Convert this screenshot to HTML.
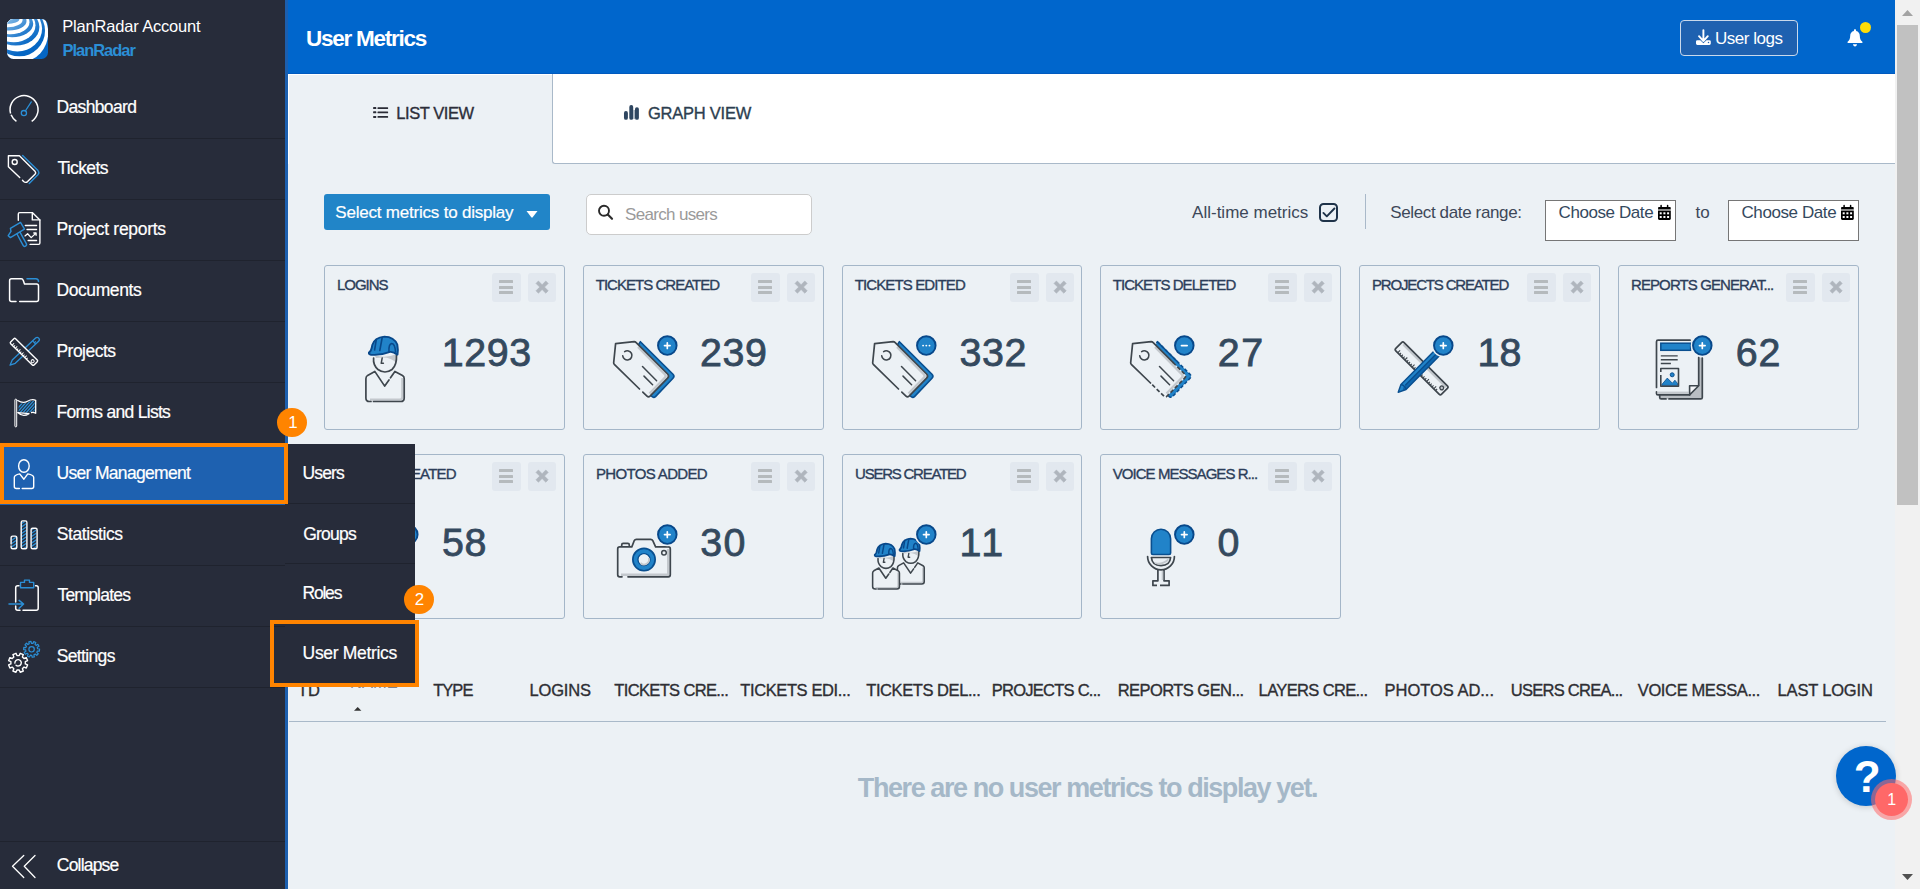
<!DOCTYPE html>
<html lang="en">
<head>
<meta charset="utf-8">
<title>User Metrics</title>
<style>
*{box-sizing:border-box;margin:0;padding:0}
html,body{width:1920px;height:889px;overflow:hidden}
body{position:relative;background:#ecf1f5;font-family:"Liberation Sans",sans-serif;color:#34495e}
.a{position:absolute}
.t{position:absolute;white-space:nowrap;line-height:1}
svg{position:absolute;overflow:visible}
#sidebar{position:absolute;left:0;top:0;width:288px;height:889px;background:#272c3a;border-right:3px solid #1c5fae}
.sep{position:absolute;left:0;width:285px;height:1px;background:#1f232e}
#header{position:absolute;left:288px;top:0;width:1607px;height:74px;background:#0066cc;border-bottom:1px solid #005abf}
#sb{position:absolute;left:1895px;top:0;width:25px;height:889px;background:#f1f1f1}
#sb .thumb{position:absolute;left:2px;top:25px;width:21px;height:480px;background:#c1c1c1}
#tabwhite{position:absolute;left:552px;top:74px;width:1343px;height:90px;background:#fff;border-left:1px solid #a9b9c9;border-bottom:1px solid #a9b9c9;border-bottom-left-radius:3px}
.card{position:absolute;height:165px;border:1px solid #a4b6c8;border-radius:3px}
.cb{position:absolute;width:28.4px;height:28.6px;background:#e2e8ef;border-radius:3px}
.cb i{position:absolute;left:6.9px;width:14.4px;height:2.9px;background:#b5babd;border-radius:.5px}

#sub{position:absolute;left:285px;top:444px;width:130px;height:240px;background:#272c3a}
.ob{position:absolute;border:4px solid #ff8400}
.badge{position:absolute;width:30px;height:29.6px;border-radius:50%;background:#ff8400}
</style>
</head>
<body>
<div id="header"></div>
<div class="t" style="left:306.06px;top:26px;font-size:22.5px;line-height:25px;color:#fff;font-weight:bold;letter-spacing:-1.257px;">User Metrics</div>
<div class="a" style="left:1680px;top:20px;width:118px;height:36px;background:#1e61b0;border:1px solid #c9d9ec;border-radius:4px"></div>
<div class="t" style="left:1714.94px;top:29px;font-size:17px;line-height:19px;color:#fff;letter-spacing:-0.474px;">User logs</div>
<svg style="left:1695px;top:29px" width="17" height="17" viewBox="0 0 17 17"><path d="M8.400 1.100V12.100M4 7.200L8.400 12.100 12.800 7.200" stroke="#fff" stroke-width="1.900" fill="none" stroke-linecap="round" stroke-linejoin="round"/><path d="M2.400 11.200H5.300L8.400 14.200 11.500 11.200H14.400Q15.800 11.200 15.800 12.600V14.600Q15.800 16 14.400 16H2.400Q1 16 1 14.600V12.600Q1 11.200 2.400 11.200Z" fill="#fff"/><circle cx="13.500" cy="13.500" r="0.750" fill="#1e61b0"/></svg>
<svg style="left:1847px;top:29px" width="16" height="18" viewBox="0 0 16 18"><path d="M8 0.3c.7 0 1.1.5 1.1 1.1v.5c2.300.5 3.700 2.300 3.700 4.800 0 3.200 1 4.800 2.600 6.100v1.200H.6v-1.200c1.600-1.300 2.600-2.900 2.600-6.100 0-2.500 1.400-4.300 3.700-4.800v-.5C6.900.8 7.300.3 8 .3z" fill="#fff"/><path d="M6 15.200h4c0 1.200-.9 2.200-2 2.200s-2-1-2-2.200z" fill="#fff"/></svg>
<div class="a" style="left:1860px;top:21.7px;width:11.2px;height:11.2px;border-radius:50%;background:#ffdd08"></div>
<div id="tabwhite"></div>
<div class="a" style="left:288px;top:74px;width:264px;height:1px;background:#fff"></div><div class="a" style="left:288px;top:74px;width:1px;height:90px;background:#fff"></div>
<svg style="left:373px;top:106px" width="16" height="13" viewBox="0 0 16 13"><rect x="0.100" y="1.1" width="3.200" height="2" rx="0.600" fill="#2a2c36"/><rect x="4.500" y="1.2000000000000002" width="10.600" height="1.800" rx="0.500" fill="#2a2c36"/><rect x="0.100" y="5.3" width="3.200" height="2" rx="0.600" fill="#2a2c36"/><rect x="4.500" y="5.3999999999999995" width="10.600" height="1.800" rx="0.500" fill="#2a2c36"/><rect x="0.100" y="9.9" width="3.200" height="2" rx="0.600" fill="#2a2c36"/><rect x="4.500" y="10.0" width="10.600" height="1.800" rx="0.500" fill="#2a2c36"/></svg>
<div class="t" style="left:396.29px;top:104px;font-size:16.5px;line-height:18px;color:#2c2e3a;letter-spacing:-0.431px;-webkit-text-stroke:0.35px currentColor;">LIST VIEW</div>
<svg style="left:623px;top:104px" width="17" height="17" viewBox="0 0 17 17"><rect x="0.980" y="7.100" width="3.920" height="8.700" rx="1.900" fill="#2e4660"/><rect x="6.300" y="1" width="3.900" height="14.800" rx="1.900" fill="#2e4660"/><rect x="12" y="3.200" width="3.900" height="12.600" rx="1.900" fill="#2e4660"/><rect x="10.200" y="6" width="1.800" height="9" fill="#a9b4c0"/></svg>
<div class="t" style="left:647.99px;top:104px;font-size:16.5px;line-height:18px;color:#2c3e50;letter-spacing:-0.239px;-webkit-text-stroke:0.35px currentColor;">GRAPH VIEW</div>
<div class="a" style="left:324px;top:194px;width:226px;height:36px;background:#2185c8;border-radius:3px"></div>
<div class="t" style="left:335.29px;top:203px;font-size:17px;line-height:19px;color:#fff;letter-spacing:-0.207px;-webkit-text-stroke:0.2px currentColor;">Select metrics to display</div>
<svg style="left:526px;top:210.5px" width="12" height="7" viewBox="0 0 12 7"><path d="M0.5 0h11L6.700 6.300a1 1 0 0 1-1.400 0z" fill="#fff"/></svg>
<div class="a" style="left:586px;top:194px;width:226px;height:41px;background:#fff;border:1px solid #ccc;border-radius:5px"></div>
<svg style="left:597px;top:204px" width="17" height="17" viewBox="0 0 17 17"><circle cx="7" cy="6.800" r="5" stroke="#2a2a2a" stroke-width="1.900" fill="none"/><path d="M10.800 10.600L15 14.800" stroke="#2a2a2a" stroke-width="2.100" stroke-linecap="round"/></svg>
<div class="t" style="left:625.09px;top:205px;font-size:17px;line-height:19px;color:#9a9a9a;letter-spacing:-0.678px;">Search users</div>
<div class="t" style="left:1192.08px;top:203px;font-size:17px;line-height:19px;color:#3d4859;">All-time metrics</div>
<div class="a" style="left:1319px;top:203px;width:19px;height:19px;border:2px solid #1f3349;border-radius:4.500px"></div>
<svg style="left:1319px;top:203px" width="19" height="19" viewBox="0 0 19 19"><path d="M4.400 9.900L7.800 13.300 15.400 5.500" stroke="#1f3349" stroke-width="1.900" fill="none" stroke-linecap="round" stroke-linejoin="round"/></svg>
<div class="a" style="left:1365px;top:194px;width:1px;height:35px;background:#a9b9c9"></div>
<div class="t" style="left:1390.19px;top:203px;font-size:17px;line-height:19px;color:#3d4859;letter-spacing:-0.364px;">Select date range:</div>
<div class="a" style="left:1545px;top:200px;width:131px;height:41px;background:#fff;border:1px solid #767676"></div>
<div class="t" style="left:1558.57px;top:203px;font-size:17px;line-height:19px;color:#34495e;letter-spacing:-0.417px;">Choose Date</div>
<svg style="left:1658px;top:204.9px" width="13" height="15" viewBox="0 0 13 15"><path d="M3.100 0.500V3M9.600 0.500V3" stroke="#000" stroke-width="1.500" stroke-linecap="round"/><rect x="0" y="2" width="12.800" height="2.300" rx="1" fill="#000"/><rect x="0" y="4" width="12.800" height="2.100" fill="#8a8a8a"/><path d="M0 6H12.800V13.600Q12.800 14.900 11.500 14.900H1.300Q0 14.900 0 13.600Z" fill="#000"/><rect x="1.7" y="7.3" width="2" height="2" fill="#fff"/><rect x="1.7" y="11" width="2" height="2" fill="#fff"/><rect x="5.4" y="7.3" width="2" height="2" fill="#fff"/><rect x="5.4" y="11" width="2" height="2" fill="#fff"/><rect x="9.1" y="7.3" width="2" height="2" fill="#fff"/><rect x="9.1" y="11" width="2" height="2" fill="#fff"/></svg>
<div class="a" style="left:1728px;top:200px;width:131px;height:41px;background:#fff;border:1px solid #767676"></div>
<div class="t" style="left:1741.47px;top:203px;font-size:17px;line-height:19px;color:#34495e;letter-spacing:-0.407px;">Choose Date</div>
<svg style="left:1841px;top:204.9px" width="13" height="15" viewBox="0 0 13 15"><path d="M3.100 0.500V3M9.600 0.500V3" stroke="#000" stroke-width="1.500" stroke-linecap="round"/><rect x="0" y="2" width="12.800" height="2.300" rx="1" fill="#000"/><rect x="0" y="4" width="12.800" height="2.100" fill="#8a8a8a"/><path d="M0 6H12.800V13.600Q12.800 14.900 11.500 14.900H1.300Q0 14.900 0 13.600Z" fill="#000"/><rect x="1.7" y="7.3" width="2" height="2" fill="#fff"/><rect x="1.7" y="11" width="2" height="2" fill="#fff"/><rect x="5.4" y="7.3" width="2" height="2" fill="#fff"/><rect x="5.4" y="11" width="2" height="2" fill="#fff"/><rect x="9.1" y="7.3" width="2" height="2" fill="#fff"/><rect x="9.1" y="11" width="2" height="2" fill="#fff"/></svg>
<div class="t" style="left:1695.58px;top:203px;font-size:17px;line-height:19px;color:#3d4859;letter-spacing:-0.024px;">to</div>
<div class="card" style="left:324px;top:265px;width:241px"></div>
<div class="cb" style="left:492.2px;top:273.2px"><i style="top:6.900px"></i><i style="top:12.700px"></i><i style="top:18.300px"></i></div>
<div class="cb" style="left:528.1px;top:273.2px"><svg style="left:8.3px;top:8.2px" width="13" height="13" viewBox="0 0 13 13"><path d="M2.400 0L6.100 3.700 9.800 0 12.200 2.400 8.500 6.100 12.200 9.800 9.800 12.200 6.100 8.500 2.400 12.200 0 9.800 3.700 6.100 0 2.400Z" fill="#afb5bd" stroke="#afb5bd" stroke-width="0.600" stroke-linejoin="round"/></svg></div>
<div class="t" style="left:337.00px;top:276px;font-size:15px;line-height:17px;color:#2c3e5a;letter-spacing:-1.018px;-webkit-text-stroke:0.35px currentColor;">LOGINS</div>
<div class="t" style="left:441.67px;top:330px;font-size:39.4px;line-height:44px;color:#34495e;letter-spacing:0.589px;-webkit-text-stroke:0.8px currentColor;">1293</div>
<svg style="left:350.0px;top:325.0px" width="70" height="90" viewBox="0 0 70 90" fill="none" ><g transform="translate(0 0) scale(1)"><path d="M24.8 46.4L17.6 50.4Q15.900 51.500 15.900 53.700V72.900Q15.900 76.500 19.500 76.500H50.700Q54.200 76.500 54.200 72.900V53.400Q54.200 51.500 52.500 50.500L44.900 46.400L34.700 61.100Z" fill="#ecf1f5"/><path d="M52.300 53V72Q52.300 74.600 49.700 74.600H20" stroke="#c3c8cd" stroke-width="2.200" fill="none"/><path d="M34.700 61.100L24.8 46.4L17.6 50.4Q15.900 51.500 15.900 53.700V72.900Q15.900 76.500 19.500 76.500H21M23.500 76.500H50.700Q54.200 76.500 54.200 72.900V53.400Q54.200 51.500 52.500 50.500L44.900 46.400L40.500 52.800M39 55L34.700 61.100" stroke="#3e464d" stroke-width="1.70" fill="none" stroke-linejoin="round" stroke-linecap="round"/><circle cx="35" cy="35.200" r="11.600" fill="#ecf1f5"/><path d="M24.500 30Q35 34 46.500 29V38Q40 30.500 26 33Z" fill="#c3c8cd"/><path d="M23.600 33Q22.900 40 28 44.500Q35 49.500 42 44.500Q47 40 46.500 30" stroke="#3e464d" stroke-width="1.70" fill="none" stroke-linecap="round"/><path d="M32.200 32.900L31.200 38.300H33.400" stroke="#3e464d" stroke-width="1.50" fill="none" stroke-linecap="round" stroke-linejoin="round"/><path d="M18.900 27.600Q21.500 26 22.300 20Q24.500 12.500 34.400 11.600Q44 11.800 47.300 19.500Q48.300 25 47.500 29.600Q43 26.500 40 26.900Q31 30.500 21 29.700Q18.600 29.300 18.900 27.600Z" fill="#2183c9" stroke="#08488a" stroke-width="1.90" stroke-linejoin="round"/><path d="M26.300 14.500L24.600 25M32.200 12.500L29.800 25.500M39 26.500Q38.500 19.500 41.500 18.500Q45 18.500 45.500 27" stroke="#08488a" stroke-width="1.60" fill="none" stroke-linecap="round"/></g></svg>
<div class="card" style="left:583px;top:265px;width:241px"></div>
<div class="cb" style="left:751.2px;top:273.2px"><i style="top:6.900px"></i><i style="top:12.700px"></i><i style="top:18.300px"></i></div>
<div class="cb" style="left:787.1px;top:273.2px"><svg style="left:8.3px;top:8.2px" width="13" height="13" viewBox="0 0 13 13"><path d="M2.400 0L6.100 3.700 9.800 0 12.200 2.400 8.500 6.100 12.200 9.800 9.800 12.200 6.100 8.500 2.400 12.200 0 9.800 3.700 6.100 0 2.400Z" fill="#afb5bd" stroke="#afb5bd" stroke-width="0.600" stroke-linejoin="round"/></svg></div>
<div class="t" style="left:595.71px;top:276px;font-size:15px;line-height:17px;color:#2c3e5a;letter-spacing:-0.974px;-webkit-text-stroke:0.35px currentColor;">TICKETS CREATED</div>
<div class="t" style="left:699.88px;top:330px;font-size:39.4px;line-height:44px;color:#34495e;letter-spacing:0.709px;-webkit-text-stroke:0.8px currentColor;">239</div>
<svg style="left:605.1px;top:325.0px" width="90" height="90" viewBox="0 0 90 90" fill="none" ><path d="M35.4 16.700L68 49.300Q69.900 51.300 68 53.300L50.500 71.600Q49 72.900 47.500 71.800L44.500 69.500L62 51.300L32.500 21.500Z" fill="#2183c9" stroke="#0a4f8f" stroke-width="1.600" stroke-linejoin="round" /><path d="M10.600 18.700L29.200 16.700Q30.300 16.700 31.200 17.600L62.600 49Q64.600 51.100 62.600 53.200L45 71.200Q43.500 72.600 42 71.200L9.300 39.300Q8.500 38.500 8.700 37.500Z" fill="#ecf1f5"/><path d="M33 22L60 49.500Q61.300 51 60 52.500L44.500 68.500" stroke="#c3c8cd" stroke-width="2.400" fill="none"/><path d="M34.500 64L9.300 39.300Q8.500 38.500 8.700 37.500L10.600 18.700L29.200 16.700Q30.300 16.700 31.200 17.600L62.600 49Q64.600 51.100 62.600 53.200L45 71.200Q43.500 72.600 42 71.200L37.800 67.200" stroke="#3e464d" stroke-width="1.700" fill="none" stroke-linejoin="round" stroke-linecap="round"/><path d="M19.66 26.63A4.600 4.600 0 1 1 17.72 30.80" stroke="#3e464d" stroke-width="1.600" fill="none" stroke-linecap="round"/><path d="M37.500 41.500L51.600 55.700M39 51.100L47.600 59.700" stroke="#3e464d" stroke-width="1.500" stroke-linecap="round"/><circle cx="62.3" cy="20.6" r="11.6" fill="#ecf1f5"/><circle cx="62.3" cy="20.6" r="9.300" fill="#2183c9" stroke="#08488a" stroke-width="1.900"/><path d="M59.5 20.6H65.1M62.3 17.8V23.4" stroke="#fff" stroke-width="1.700" stroke-linecap="round"/></svg>
<div class="card" style="left:842px;top:265px;width:240px"></div>
<div class="cb" style="left:1010.2px;top:273.2px"><i style="top:6.900px"></i><i style="top:12.700px"></i><i style="top:18.300px"></i></div>
<div class="cb" style="left:1046.1px;top:273.2px"><svg style="left:8.3px;top:8.2px" width="13" height="13" viewBox="0 0 13 13"><path d="M2.400 0L6.100 3.700 9.800 0 12.200 2.400 8.500 6.100 12.200 9.800 9.800 12.200 6.100 8.500 2.400 12.200 0 9.800 3.700 6.100 0 2.400Z" fill="#afb5bd" stroke="#afb5bd" stroke-width="0.600" stroke-linejoin="round"/></svg></div>
<div class="t" style="left:854.71px;top:276px;font-size:15px;line-height:17px;color:#2c3e5a;letter-spacing:-0.879px;-webkit-text-stroke:0.35px currentColor;">TICKETS EDITED</div>
<div class="t" style="left:959.49px;top:330px;font-size:39.4px;line-height:44px;color:#34495e;letter-spacing:0.544px;-webkit-text-stroke:0.8px currentColor;">332</div>
<svg style="left:864.1px;top:325.0px" width="90" height="90" viewBox="0 0 90 90" fill="none" ><path d="M35.4 16.700L68 49.300Q69.900 51.300 68 53.300L50.500 71.600Q49 72.900 47.500 71.800L44.500 69.500L62 51.300L32.500 21.500Z" fill="#2183c9" stroke="#0a4f8f" stroke-width="1.600" stroke-linejoin="round" /><path d="M10.600 18.700L29.200 16.700Q30.300 16.700 31.200 17.600L62.600 49Q64.600 51.100 62.600 53.200L45 71.200Q43.500 72.600 42 71.200L9.300 39.300Q8.500 38.500 8.700 37.500Z" fill="#ecf1f5"/><path d="M33 22L60 49.500Q61.300 51 60 52.500L44.500 68.500" stroke="#c3c8cd" stroke-width="2.400" fill="none"/><path d="M34.500 64L9.300 39.300Q8.500 38.500 8.700 37.500L10.600 18.700L29.200 16.700Q30.300 16.700 31.200 17.600L62.600 49Q64.600 51.100 62.600 53.200L45 71.200Q43.500 72.600 42 71.200L37.800 67.200" stroke="#3e464d" stroke-width="1.700" fill="none" stroke-linejoin="round" stroke-linecap="round"/><path d="M19.66 26.63A4.600 4.600 0 1 1 17.72 30.80" stroke="#3e464d" stroke-width="1.600" fill="none" stroke-linecap="round"/><path d="M37.500 41.500L51.600 55.700M39 51.100L47.600 59.700" stroke="#3e464d" stroke-width="1.500" stroke-linecap="round"/><circle cx="62.3" cy="20.6" r="11.6" fill="#ecf1f5"/><circle cx="62.3" cy="20.6" r="9.300" fill="#2183c9" stroke="#08488a" stroke-width="1.900"/><circle cx="59.099999999999994" cy="20.6" r="0.950" fill="#fff"/><circle cx="62.3" cy="20.6" r="0.950" fill="#fff"/><circle cx="65.5" cy="20.6" r="0.950" fill="#fff"/></svg>
<div class="card" style="left:1100px;top:265px;width:241px"></div>
<div class="cb" style="left:1268.2px;top:273.2px"><i style="top:6.900px"></i><i style="top:12.700px"></i><i style="top:18.300px"></i></div>
<div class="cb" style="left:1304.1px;top:273.2px"><svg style="left:8.3px;top:8.2px" width="13" height="13" viewBox="0 0 13 13"><path d="M2.400 0L6.100 3.700 9.800 0 12.200 2.400 8.500 6.100 12.200 9.800 9.800 12.200 6.100 8.500 2.400 12.200 0 9.800 3.700 6.100 0 2.400Z" fill="#afb5bd" stroke="#afb5bd" stroke-width="0.600" stroke-linejoin="round"/></svg></div>
<div class="t" style="left:1112.71px;top:276px;font-size:15px;line-height:17px;color:#2c3e5a;letter-spacing:-0.938px;-webkit-text-stroke:0.35px currentColor;">TICKETS DELETED</div>
<div class="t" style="left:1217.78px;top:330px;font-size:39.4px;line-height:44px;color:#34495e;letter-spacing:1.631px;-webkit-text-stroke:0.8px currentColor;">27</div>
<svg style="left:1122.1000000000001px;top:325.0px" width="90" height="90" viewBox="0 0 90 90" fill="none" ><path d="M35.4 16.700L68 49.300Q69.900 51.300 68 53.300L50.500 71.600Q49 72.900 47.500 71.800L44.500 69.500L62 51.300L32.500 21.500Z" fill="#2183c9" stroke="#0a4f8f" stroke-width="1.600" stroke-linejoin="round" stroke-dasharray="3.500 2"/><path d="M35.4 16.700L55 36.300" stroke="#0a4f8f" stroke-width="1.600"/><path d="M10.600 18.700L29.200 16.700Q30.300 16.700 31.200 17.600L62.600 49Q64.600 51.100 62.600 53.200L45 71.200Q43.500 72.600 42 71.200L9.300 39.300Q8.500 38.500 8.700 37.500Z" fill="#ecf1f5"/><path d="M33 22L60 49.500Q61.300 51 60 52.500L44.500 68.500" stroke="#c3c8cd" stroke-width="2.400" fill="none"/><path d="M28.500 58L9.300 39.300Q8.500 38.500 8.700 37.500L10.600 18.700L29.200 16.700Q30.300 16.700 31.200 17.600L51 37.400" stroke="#3e464d" stroke-width="1.700" fill="none" stroke-linejoin="round" stroke-linecap="round"/><path d="M51 37.400L62.600 49Q64.600 51.100 62.600 53.200L45 71.200Q43.500 72.600 42 71.200L28.500 58" stroke="#3e464d" stroke-width="1.700" fill="none" stroke-dasharray="4 2.200"/><path d="M19.66 26.63A4.600 4.600 0 1 1 17.72 30.80" stroke="#3e464d" stroke-width="1.600" fill="none" stroke-linecap="round"/><path d="M37.500 41.500L51.600 55.700M39 51.100L47.600 59.700" stroke="#3e464d" stroke-width="1.500" stroke-linecap="round"/><circle cx="62.3" cy="20.6" r="11.6" fill="#ecf1f5"/><circle cx="62.3" cy="20.6" r="9.300" fill="#2183c9" stroke="#08488a" stroke-width="1.900"/><path d="M59.5 20.6H65.1" stroke="#fff" stroke-width="1.800" stroke-linecap="round"/></svg>
<div class="card" style="left:1359px;top:265px;width:241px"></div>
<div class="cb" style="left:1527.2px;top:273.2px"><i style="top:6.900px"></i><i style="top:12.700px"></i><i style="top:18.300px"></i></div>
<div class="cb" style="left:1563.1px;top:273.2px"><svg style="left:8.3px;top:8.2px" width="13" height="13" viewBox="0 0 13 13"><path d="M2.400 0L6.100 3.700 9.800 0 12.200 2.400 8.500 6.100 12.200 9.800 9.800 12.200 6.100 8.500 2.400 12.200 0 9.800 3.700 6.100 0 2.400Z" fill="#afb5bd" stroke="#afb5bd" stroke-width="0.600" stroke-linejoin="round"/></svg></div>
<div class="t" style="left:1372.00px;top:276px;font-size:15px;line-height:17px;color:#2c3e5a;letter-spacing:-1.168px;-webkit-text-stroke:0.35px currentColor;">PROJECTS CREATED</div>
<div class="t" style="left:1477.57px;top:330px;font-size:39.4px;line-height:44px;color:#34495e;letter-spacing:0.031px;-webkit-text-stroke:0.8px currentColor;">18</div>
<svg style="left:1381.1000000000001px;top:325.0px" width="90" height="90" viewBox="0 0 90 90" fill="none" ><g transform="translate(40.6 43.4) rotate(45)"><rect x="-32.400" y="-5.900" width="64.800" height="11.800" rx="1.800" fill="#ecf1f5"/><path d="M-30 -4H30.500" stroke="#c3c8cd" stroke-width="2.200"/><rect x="-32.400" y="-5.900" width="64.800" height="11.800" rx="1.800" fill="none" stroke="#3e464d" stroke-width="1.700"/><path d="M-28.00 5.900V2.4M-25.45 5.900V3.6M-22.90 5.900V3.6M-20.35 5.900V3.6M-17.80 5.900V2.4M-15.25 5.900V3.6M-12.70 5.900V3.6M-10.15 5.900V3.6M-7.60 5.900V2.4M-5.05 5.900V3.6M-2.50 5.900V3.6M0.05 5.900V3.6M2.60 5.900V2.4M5.15 5.900V3.6M7.70 5.900V3.6M10.25 5.900V3.6M12.80 5.900V2.4M15.35 5.900V3.6M17.90 5.900V3.6M20.45 5.900V3.6M23.00 5.900V2.4M25.55 5.900V3.6" stroke="#3e464d" stroke-width="1.100"/><circle cx="28" cy="-0.500" r="1.900" stroke="#3e464d" stroke-width="1.300" fill="#c3c8cd"/></g><g transform="translate(36.200 48.100) rotate(-45.300)"><path d="M-19.500 -3.600H28V3.600H-19.500L-27 0Z" fill="#2183c9"/><path d="M-19.500 0H28V3.600H-19.500L-23 2Z" fill="#0f66ae"/><path d="M-19.500 -3.600H28V3.600H-19.500L-27 0ZM-19.500 -3.600Q-17.500 0 -19.500 3.600M-17 0H27" stroke="#0a4f8f" stroke-width="1.400" fill="none" stroke-linejoin="round"/></g><circle cx="62.3" cy="20.6" r="11.6" fill="#ecf1f5"/><circle cx="62.3" cy="20.6" r="9.300" fill="#2183c9" stroke="#08488a" stroke-width="1.900"/><path d="M59.5 20.6H65.1M62.3 17.8V23.4" stroke="#fff" stroke-width="1.700" stroke-linecap="round"/></svg>
<div class="card" style="left:1618px;top:265px;width:241px"></div>
<div class="cb" style="left:1786.2px;top:273.2px"><i style="top:6.900px"></i><i style="top:12.700px"></i><i style="top:18.300px"></i></div>
<div class="cb" style="left:1822.1px;top:273.2px"><svg style="left:8.3px;top:8.2px" width="13" height="13" viewBox="0 0 13 13"><path d="M2.400 0L6.100 3.700 9.800 0 12.200 2.400 8.500 6.100 12.200 9.800 9.800 12.200 6.100 8.500 2.400 12.200 0 9.800 3.700 6.100 0 2.400Z" fill="#afb5bd" stroke="#afb5bd" stroke-width="0.600" stroke-linejoin="round"/></svg></div>
<div class="t" style="left:1631.00px;top:276px;font-size:15px;line-height:17px;color:#2c3e5a;letter-spacing:-0.906px;-webkit-text-stroke:0.35px currentColor;">REPORTS GENERAT...</div>
<div class="t" style="left:1735.85px;top:330px;font-size:39.4px;line-height:44px;color:#34495e;letter-spacing:0.859px;-webkit-text-stroke:0.8px currentColor;">62</div>
<svg style="left:1640.1000000000001px;top:325.0px" width="90" height="90" viewBox="0 0 90 90" fill="none" ><path d="M58.700 32.400H62.300V72.400Q62.300 73.900 60.800 73.900H21.200Q19.700 73.900 19.700 72.400V69.900H49.600L58.700 60.200Z" fill="#b9bec3"/><path d="M62.300 32.900V72.400Q62.300 73.900 60.800 73.900H29M26 73.900H21.200Q19.700 73.900 19.700 72.400V70.500" stroke="#3e464d" stroke-width="1.700" fill="none" stroke-linecap="round"/><path d="M16.500 16.700Q16.500 15.200 18 15.200H58.700V60.200L49.600 69.900H18Q16.500 69.900 16.500 68.400Z" fill="#ecf1f5"/><path d="M18 67.800H48.500" stroke="#c3c8cd" stroke-width="2.400"/><path d="M49.600 69.900V60.700H58.700Z" fill="#f4f6f9" stroke="#3e464d" stroke-width="1.600" stroke-linejoin="round"/><path d="M50.100 15.200H18Q16.500 15.200 16.500 16.700V62.500M16.500 66.800V68.400Q16.500 69.900 18 69.900H49.600M58.700 32.400V60.200" stroke="#3e464d" stroke-width="1.700" fill="none" stroke-linecap="round"/><rect x="20.800" y="18.200" width="29.800" height="7.100" fill="#2183c9" stroke="#0a4f8f" stroke-width="1.500"/><path d="M20.800 30.900H37.700M20.800 34.700H37.700M20.800 38.500H30.900" stroke="#3e464d" stroke-width="1.400"/><path d="M21.800 59.600L27.300 53.100 32.400 58.200 34.900 55.200 37.700 58.700V60.400H21.800Z" fill="#2183c9" stroke="#0a4f8f" stroke-width="0.800"/><circle cx="32.200" cy="49.800" r="2" fill="#2183c9" stroke="#0a4f8f" stroke-width="1"/><path d="M20.800 47V43.500H38.500V61.200H20.800V50" stroke="#3e464d" stroke-width="1.600" fill="none" stroke-linejoin="round"/><circle cx="62.3" cy="20.6" r="11.6" fill="#ecf1f5"/><circle cx="62.3" cy="20.6" r="9.300" fill="#2183c9" stroke="#08488a" stroke-width="1.900"/><path d="M59.5 20.6H65.1M62.3 17.8V23.4" stroke="#fff" stroke-width="1.700" stroke-linecap="round"/></svg>
<div class="card" style="left:324px;top:454px;width:241px"></div>
<div class="cb" style="left:492.2px;top:462.2px"><i style="top:6.900px"></i><i style="top:12.700px"></i><i style="top:18.300px"></i></div>
<div class="cb" style="left:528.1px;top:462.2px"><svg style="left:8.3px;top:8.2px" width="13" height="13" viewBox="0 0 13 13"><path d="M2.400 0L6.100 3.700 9.800 0 12.200 2.400 8.500 6.100 12.200 9.800 9.800 12.200 6.100 8.500 2.400 12.200 0 9.800 3.700 6.100 0 2.400Z" fill="#afb5bd" stroke="#afb5bd" stroke-width="0.600" stroke-linejoin="round"/></svg></div>
<div class="t" style="left:334.20px;top:465px;font-size:15px;line-height:17px;color:#2c3e5a;letter-spacing:-0.801px;-webkit-text-stroke:0.35px currentColor;">LAYERS CREATED</div>
<div class="t" style="left:442.09px;top:520px;font-size:39.4px;line-height:44px;color:#34495e;letter-spacing:0.414px;-webkit-text-stroke:0.8px currentColor;">58</div>
<svg style="left:346.09999999999997px;top:514.0px" width="90" height="90" viewBox="0 0 90 90" fill="none" ><path d="M12 45L38 32 64 45 38 58Z" fill="#2183c9" stroke="#0a4f8f" stroke-width="1.600" stroke-linejoin="round"/><path d="M12 53L38 66 64 53M12 61L38 74 64 61" stroke="#3e464d" stroke-width="1.700" fill="none" stroke-linejoin="round"/><circle cx="62.3" cy="20.6" r="11.6" fill="#ecf1f5"/><circle cx="62.3" cy="20.6" r="9.300" fill="#2183c9" stroke="#08488a" stroke-width="1.900"/><path d="M59.5 20.6H65.1M62.3 17.8V23.4" stroke="#fff" stroke-width="1.700" stroke-linecap="round"/></svg>
<div class="card" style="left:583px;top:454px;width:241px"></div>
<div class="cb" style="left:751.2px;top:462.2px"><i style="top:6.900px"></i><i style="top:12.700px"></i><i style="top:18.300px"></i></div>
<div class="cb" style="left:787.1px;top:462.2px"><svg style="left:8.3px;top:8.2px" width="13" height="13" viewBox="0 0 13 13"><path d="M2.400 0L6.100 3.700 9.800 0 12.200 2.400 8.500 6.100 12.200 9.800 9.800 12.200 6.100 8.500 2.400 12.200 0 9.800 3.700 6.100 0 2.400Z" fill="#afb5bd" stroke="#afb5bd" stroke-width="0.600" stroke-linejoin="round"/></svg></div>
<div class="t" style="left:596.00px;top:465px;font-size:15px;line-height:17px;color:#2c3e5a;letter-spacing:-0.656px;-webkit-text-stroke:0.35px currentColor;">PHOTOS ADDED</div>
<div class="t" style="left:700.29px;top:520px;font-size:39.4px;line-height:44px;color:#34495e;letter-spacing:1.263px;-webkit-text-stroke:0.8px currentColor;">30</div>
<svg style="left:605.1px;top:514.0px" width="90" height="90" viewBox="0 0 90 90" fill="none" ><path d="M14.700 32.900H26.800L29.200 26.700Q29.900 25.300 31.400 25.300H45.600Q47.100 25.300 47.800 26.700L50.600 32.900H63.300Q65.300 32.900 65.300 34.900V60.800Q65.300 62.800 63.300 62.800H14.700Q12.700 62.800 12.700 60.800V34.900Q12.700 32.900 14.700 32.900Z" fill="#ecf1f5"/><path d="M63.200 35V60.700H16" stroke="#c3c8cd" stroke-width="2.400" fill="none"/><path d="M16.700 32V30.900Q16.700 29.400 18.200 29.400H22.800Q24.300 29.400 24.300 30.900V32" stroke="#3e464d" stroke-width="1.700" fill="none"/><path d="M17 62.800H14.700Q12.700 62.800 12.700 60.800V34.900Q12.700 32.900 14.700 32.900H26.800L29.200 26.700Q29.900 25.300 31.400 25.300H45.600Q47.100 25.300 47.800 26.700L50.600 32.900H63.300Q65.300 32.900 65.300 34.900V60.800Q65.300 62.800 63.300 62.800H23" stroke="#3e464d" stroke-width="1.700" fill="none" stroke-linejoin="round" stroke-linecap="round"/><circle cx="39" cy="45.600" r="8.700" fill="none" stroke="#0a4f8f" stroke-width="6.600"/><circle cx="39" cy="45.600" r="8.500" fill="none" stroke="#2183c9" stroke-width="3.600"/><circle cx="39" cy="45.600" r="5" fill="#ecf1f5"/><path d="M35.500 49A5 5 0 0 0 43.800 44" stroke="#c3c8cd" stroke-width="1.800" fill="none"/><circle cx="59" cy="38.700" r="2.300" stroke="#3e464d" stroke-width="1.500" fill="none"/><circle cx="62.3" cy="20.6" r="11.6" fill="#ecf1f5"/><circle cx="62.3" cy="20.6" r="9.300" fill="#2183c9" stroke="#08488a" stroke-width="1.900"/><path d="M59.5 20.6H65.1M62.3 17.8V23.4" stroke="#fff" stroke-width="1.700" stroke-linecap="round"/></svg>
<div class="card" style="left:842px;top:454px;width:240px"></div>
<div class="cb" style="left:1010.2px;top:462.2px"><i style="top:6.900px"></i><i style="top:12.700px"></i><i style="top:18.300px"></i></div>
<div class="cb" style="left:1046.1px;top:462.2px"><svg style="left:8.3px;top:8.2px" width="13" height="13" viewBox="0 0 13 13"><path d="M2.400 0L6.100 3.700 9.800 0 12.200 2.400 8.500 6.100 12.200 9.800 9.800 12.200 6.100 8.500 2.400 12.200 0 9.800 3.700 6.100 0 2.400Z" fill="#afb5bd" stroke="#afb5bd" stroke-width="0.600" stroke-linejoin="round"/></svg></div>
<div class="t" style="left:855.05px;top:465px;font-size:15px;line-height:17px;color:#2c3e5a;letter-spacing:-1.232px;-webkit-text-stroke:0.35px currentColor;">USERS CREATED</div>
<div class="t" style="left:959.47px;top:520px;font-size:39.4px;line-height:44px;color:#34495e;letter-spacing:2.916px;-webkit-text-stroke:0.8px currentColor;">11</div>
<svg style="left:864.1px;top:514.0px" width="90" height="90" viewBox="0 0 90 90" fill="none" ><g transform="translate(22.3 16.4) scale(0.7)"><path d="M24.8 46.4L17.6 50.4Q15.900 51.500 15.900 53.700V72.900Q15.900 76.500 19.500 76.500H50.700Q54.200 76.500 54.200 72.900V53.400Q54.200 51.500 52.500 50.500L44.900 46.400L34.700 61.100Z" fill="#ecf1f5"/><path d="M52.300 53V72Q52.300 74.600 49.700 74.600H20" stroke="#c3c8cd" stroke-width="2.200" fill="none"/><path d="M34.700 61.100L24.8 46.4L17.6 50.4Q15.900 51.500 15.900 53.700V72.900Q15.900 76.500 19.500 76.500H21M23.500 76.500H50.700Q54.200 76.500 54.200 72.900V53.400Q54.200 51.500 52.500 50.500L44.900 46.400L40.500 52.800M39 55L34.700 61.100" stroke="#3e464d" stroke-width="2.22" fill="none" stroke-linejoin="round" stroke-linecap="round"/><circle cx="35" cy="35.200" r="11.600" fill="#ecf1f5"/><path d="M24.500 30Q35 34 46.500 29V38Q40 30.500 26 33Z" fill="#c3c8cd"/><path d="M23.600 33Q22.900 40 28 44.500Q35 49.500 42 44.500Q47 40 46.500 30" stroke="#3e464d" stroke-width="2.22" fill="none" stroke-linecap="round"/><path d="M32.200 32.900L31.200 38.300H33.400" stroke="#3e464d" stroke-width="1.96" fill="none" stroke-linecap="round" stroke-linejoin="round"/><path d="M18.900 27.600Q21.500 26 22.300 20Q24.500 12.500 34.400 11.600Q44 11.800 47.300 19.500Q48.300 25 47.500 29.600Q43 26.500 40 26.900Q31 30.500 21 29.700Q18.600 29.300 18.900 27.600Z" fill="#2183c9" stroke="#08488a" stroke-width="2.48" stroke-linejoin="round"/><path d="M26.300 14.500L24.600 25M32.200 12.500L29.800 25.500M39 26.500Q38.500 19.500 41.500 18.500Q45 18.500 45.500 27" stroke="#08488a" stroke-width="2.09" fill="none" stroke-linecap="round"/></g><g transform="translate(-2.5 21.5) scale(0.7)"><path d="M24.8 46.4L17.6 50.4Q15.900 51.500 15.900 53.700V72.900Q15.900 76.500 19.500 76.500H50.700Q54.200 76.500 54.200 72.900V53.400Q54.200 51.500 52.500 50.500L44.900 46.400L34.700 61.100Z" fill="#ecf1f5"/><path d="M52.300 53V72Q52.300 74.600 49.700 74.600H20" stroke="#c3c8cd" stroke-width="2.200" fill="none"/><path d="M34.700 61.100L24.8 46.4L17.6 50.4Q15.900 51.500 15.900 53.700V72.900Q15.900 76.500 19.500 76.500H21M23.500 76.500H50.700Q54.200 76.500 54.200 72.900V53.400Q54.200 51.500 52.500 50.500L44.900 46.400L40.500 52.800M39 55L34.700 61.100" stroke="#3e464d" stroke-width="2.22" fill="none" stroke-linejoin="round" stroke-linecap="round"/><circle cx="35" cy="35.200" r="11.600" fill="#ecf1f5"/><path d="M24.500 30Q35 34 46.500 29V38Q40 30.500 26 33Z" fill="#c3c8cd"/><path d="M23.600 33Q22.900 40 28 44.500Q35 49.500 42 44.500Q47 40 46.500 30" stroke="#3e464d" stroke-width="2.22" fill="none" stroke-linecap="round"/><path d="M32.200 32.900L31.200 38.300H33.400" stroke="#3e464d" stroke-width="1.96" fill="none" stroke-linecap="round" stroke-linejoin="round"/><path d="M18.900 27.600Q21.500 26 22.300 20Q24.500 12.500 34.400 11.600Q44 11.800 47.300 19.500Q48.300 25 47.500 29.600Q43 26.500 40 26.900Q31 30.500 21 29.700Q18.600 29.300 18.900 27.600Z" fill="#2183c9" stroke="#08488a" stroke-width="2.48" stroke-linejoin="round"/><path d="M26.300 14.500L24.600 25M32.200 12.500L29.800 25.500M39 26.500Q38.500 19.500 41.500 18.500Q45 18.500 45.500 27" stroke="#08488a" stroke-width="2.09" fill="none" stroke-linecap="round"/></g><circle cx="62.3" cy="20.6" r="11.6" fill="#ecf1f5"/><circle cx="62.3" cy="20.6" r="9.300" fill="#2183c9" stroke="#08488a" stroke-width="1.900"/><path d="M59.5 20.6H65.1M62.3 17.8V23.4" stroke="#fff" stroke-width="1.700" stroke-linecap="round"/></svg>
<div class="card" style="left:1100px;top:454px;width:241px"></div>
<div class="cb" style="left:1268.2px;top:462.2px"><i style="top:6.900px"></i><i style="top:12.700px"></i><i style="top:18.300px"></i></div>
<div class="cb" style="left:1304.1px;top:462.2px"><svg style="left:8.3px;top:8.2px" width="13" height="13" viewBox="0 0 13 13"><path d="M2.400 0L6.100 3.700 9.800 0 12.200 2.400 8.500 6.100 12.200 9.800 9.800 12.200 6.100 8.500 2.400 12.200 0 9.800 3.700 6.100 0 2.400Z" fill="#afb5bd" stroke="#afb5bd" stroke-width="0.600" stroke-linejoin="round"/></svg></div>
<div class="t" style="left:1112.75px;top:465px;font-size:15px;line-height:17px;color:#2c3e5a;letter-spacing:-0.952px;-webkit-text-stroke:0.35px currentColor;">VOICE MESSAGES R...</div>
<div class="t" style="left:1217.52px;top:520px;font-size:39.4px;line-height:44px;color:#34495e;-webkit-text-stroke:0.8px currentColor;">0</div>
<svg style="left:1122.1000000000001px;top:514.0px" width="90" height="90" viewBox="0 0 90 90" fill="none" ><path d="M29.400 24.800A9.600 9.600 0 0 1 48.600 24.800V39Q48.600 40.500 47.100 40.500H30.900Q29.400 40.500 29.400 39Z" fill="#2183c9" stroke="#0a4f8f" stroke-width="1.600"/><path d="M29.400 43.500H48.600Q48 51.600 39 51.600Q30 51.600 29.400 43.500Z" fill="#ecf1f5" stroke="#3e464d" stroke-width="1.700" stroke-linejoin="round"/><path d="M33 49Q39 51.500 46.500 45.500" stroke="#c3c8cd" stroke-width="1.800" fill="none"/><path d="M25.600 42.500A13.400 13.400 0 0 0 52.400 42.500" stroke="#3e464d" stroke-width="1.700" fill="none" stroke-linecap="round"/><path d="M35.900 56V66.800H30.900V71.400H35M38 71.400H47.100V66.800H42V56" stroke="#3e464d" stroke-width="1.700" fill="none" stroke-linejoin="round"/><path d="M40.500 57V66" stroke="#c3c8cd" stroke-width="1.600"/><circle cx="62.3" cy="20.6" r="11.6" fill="#ecf1f5"/><circle cx="62.3" cy="20.6" r="9.300" fill="#2183c9" stroke="#08488a" stroke-width="1.900"/><path d="M59.5 20.6H65.1M62.3 17.8V23.4" stroke="#fff" stroke-width="1.700" stroke-linecap="round"/></svg>
<div class="t" style="left:300.56px;top:681px;font-size:16.5px;line-height:18px;color:#2e2e33;letter-spacing:2.775px;-webkit-text-stroke:0.35px currentColor;">ID</div>
<div class="t" style="left:433.18px;top:681px;font-size:16.5px;line-height:18px;color:#2e2e33;letter-spacing:-0.959px;-webkit-text-stroke:0.35px currentColor;">TYPE</div>
<div class="t" style="left:529.59px;top:681px;font-size:16.5px;line-height:18px;color:#2e2e33;letter-spacing:-0.187px;-webkit-text-stroke:0.35px currentColor;">LOGINS</div>
<div class="t" style="left:614.28px;top:681px;font-size:16.5px;line-height:18px;color:#2e2e33;letter-spacing:-0.639px;-webkit-text-stroke:0.35px currentColor;">TICKETS CRE...</div>
<div class="t" style="left:740.28px;top:681px;font-size:16.5px;line-height:18px;color:#2e2e33;letter-spacing:-0.385px;-webkit-text-stroke:0.35px currentColor;">TICKETS EDI...</div>
<div class="t" style="left:866.28px;top:681px;font-size:16.5px;line-height:18px;color:#2e2e33;letter-spacing:-0.425px;-webkit-text-stroke:0.35px currentColor;">TICKETS DEL...</div>
<div class="t" style="left:991.79px;top:681px;font-size:16.5px;line-height:18px;color:#2e2e33;letter-spacing:-0.744px;-webkit-text-stroke:0.35px currentColor;">PROJECTS C...</div>
<div class="t" style="left:1117.69px;top:681px;font-size:16.5px;line-height:18px;color:#2e2e33;letter-spacing:-0.547px;-webkit-text-stroke:0.35px currentColor;">REPORTS GEN...</div>
<div class="t" style="left:1258.59px;top:681px;font-size:16.5px;line-height:18px;color:#2e2e33;letter-spacing:-0.628px;-webkit-text-stroke:0.35px currentColor;">LAYERS CRE...</div>
<div class="t" style="left:1384.59px;top:681px;font-size:16.5px;line-height:18px;color:#2e2e33;letter-spacing:-0.029px;-webkit-text-stroke:0.35px currentColor;">PHOTOS AD...</div>
<div class="t" style="left:1510.77px;top:681px;font-size:16.5px;line-height:18px;color:#2e2e33;letter-spacing:-0.726px;-webkit-text-stroke:0.35px currentColor;">USERS CREA...</div>
<div class="t" style="left:1637.77px;top:681px;font-size:16.5px;line-height:18px;color:#2e2e33;letter-spacing:-0.369px;-webkit-text-stroke:0.35px currentColor;">VOICE MESSA...</div>
<div class="t" style="left:1777.59px;top:681px;font-size:16.5px;line-height:18px;color:#2e2e33;letter-spacing:-0.182px;-webkit-text-stroke:0.35px currentColor;">LAST LOGIN</div>
<div class="t" style="left:350.09px;top:673px;font-size:16.5px;line-height:18px;color:#7d828c;letter-spacing:0.040px;">NAME</div>
<svg style="left:353.7px;top:707.4px" width="8" height="4" viewBox="0 0 8 4"><path d="M0 3.700L3.700 0 7.400 3.700z" fill="#333"/></svg>
<div class="a" style="left:289px;top:721px;width:1597px;height:1px;background:#a9b9c9"></div>
<div class="t" style="left:857.84px;top:773px;font-size:27px;line-height:30px;color:#a5b8c8;font-weight:bold;letter-spacing:-1.425px;">There are no user metrics to display yet.</div>
<div id="sidebar"></div>
<div class="t" style="left:62.29px;top:17px;font-size:16.5px;line-height:18px;color:#fff;letter-spacing:-0.179px;">PlanRadar Account</div>
<div class="t" style="left:62.49px;top:41px;font-size:16.5px;line-height:18px;color:#2b8fd6;font-weight:bold;letter-spacing:-1.036px;">PlanRadar</div>
<div class="sep" style="top:138px"></div>
<div class="sep" style="top:199px"></div>
<div class="sep" style="top:260px"></div>
<div class="sep" style="top:321px"></div>
<div class="sep" style="top:382px"></div>
<div class="sep" style="top:443px"></div>
<div class="sep" style="top:504px"></div>
<div class="sep" style="top:565px"></div>
<div class="sep" style="top:626px"></div>
<div class="sep" style="top:687px"></div>
<div class="sep" style="top:841px"></div>
<div id="sub"></div>
<div class="a" style="left:285px;top:503px;width:130px;height:1px;background:#1f232e"></div>
<div class="a" style="left:285px;top:563px;width:130px;height:1px;background:#1f232e"></div>
<div class="a" style="left:285px;top:623px;width:130px;height:1px;background:#1f232e"></div>
<div class="a" style="left:0px;top:443px;width:285px;height:62px;background:#1e61b0"></div>
<div class="ob" style="left:0;top:443px;width:288px;height:61px"></div>
<div class="ob" style="left:270px;top:620px;width:149px;height:67px"></div>
<div class="t" style="left:56.43px;top:97px;font-size:17.5px;line-height:20px;color:#fff;letter-spacing:-0.634px;-webkit-text-stroke:0.2px currentColor;">Dashboard</div>
<div class="t" style="left:57.46px;top:158px;font-size:17.5px;line-height:20px;color:#fff;letter-spacing:-0.635px;-webkit-text-stroke:0.2px currentColor;">Tickets</div>
<div class="t" style="left:56.43px;top:219px;font-size:17.5px;line-height:20px;color:#fff;letter-spacing:-0.298px;-webkit-text-stroke:0.2px currentColor;">Project reports</div>
<div class="t" style="left:56.43px;top:280px;font-size:17.5px;line-height:20px;color:#fff;letter-spacing:-0.408px;-webkit-text-stroke:0.2px currentColor;">Documents</div>
<div class="t" style="left:56.43px;top:341px;font-size:17.5px;line-height:20px;color:#fff;letter-spacing:-0.513px;-webkit-text-stroke:0.2px currentColor;">Projects</div>
<div class="t" style="left:56.43px;top:402px;font-size:17.5px;line-height:20px;color:#fff;letter-spacing:-0.719px;-webkit-text-stroke:0.2px currentColor;">Forms and Lists</div>
<div class="t" style="left:56.51px;top:463px;font-size:17.5px;line-height:20px;color:#fff;letter-spacing:-0.679px;-webkit-text-stroke:0.2px currentColor;">User Management</div>
<div class="t" style="left:56.73px;top:524px;font-size:17.5px;line-height:20px;color:#fff;letter-spacing:-0.408px;-webkit-text-stroke:0.2px currentColor;">Statistics</div>
<div class="t" style="left:57.46px;top:585px;font-size:17.5px;line-height:20px;color:#fff;letter-spacing:-0.788px;-webkit-text-stroke:0.2px currentColor;">Templates</div>
<div class="t" style="left:56.73px;top:646px;font-size:17.5px;line-height:20px;color:#fff;letter-spacing:-0.641px;-webkit-text-stroke:0.2px currentColor;">Settings</div>
<div class="t" style="left:56.81px;top:855px;font-size:17.5px;line-height:20px;color:#fff;letter-spacing:-0.808px;-webkit-text-stroke:0.2px currentColor;">Collapse</div>
<div class="t" style="left:302.61px;top:463px;font-size:17.5px;line-height:20px;color:#fff;letter-spacing:-0.915px;-webkit-text-stroke:0.2px currentColor;">Users</div>
<div class="t" style="left:303.17px;top:524px;font-size:17.5px;line-height:20px;color:#fff;letter-spacing:-0.761px;-webkit-text-stroke:0.2px currentColor;">Groups</div>
<div class="t" style="left:302.53px;top:583px;font-size:17.5px;line-height:20px;color:#fff;letter-spacing:-1.218px;-webkit-text-stroke:0.2px currentColor;">Roles</div>
<div class="t" style="left:302.61px;top:643px;font-size:17.5px;line-height:20px;color:#fff;letter-spacing:-0.334px;-webkit-text-stroke:0.2px currentColor;">User Metrics</div>
<div class="badge" style="left:277.400px;top:407.600px"></div>
<div class="t" style="left:288.25px;top:413px;font-size:16.9px;line-height:19px;color:#fff;">1</div>
<div class="badge" style="left:404px;top:584.600px"></div>
<div class="t" style="left:414.80px;top:590px;font-size:16.9px;line-height:19px;color:#fff;">2</div>
<svg style="left:7px;top:19px" width="41" height="40" viewBox="0 0 41 40" fill="none" ><defs><linearGradient id="lg" gradientUnits="userSpaceOnUse" x1="2" y1="0" x2="26" y2="34"><stop offset="0" stop-color="#7db6e4"/><stop offset="0.450" stop-color="#2a7fce"/><stop offset="0.800" stop-color="#0566c4"/></linearGradient><clipPath id="lc"><rect x="0" y="0" width="41" height="40" rx="6.500"/></clipPath></defs><g clip-path="url(#lc)"><rect width="41" height="40" fill="#0566c4"/><ellipse cx="14.47" cy="13.69" rx="26.73" ry="28.95" fill="#fff"/><ellipse cx="12.42" cy="11.74" rx="25.61" ry="25.61" fill="url(#lg)"/><ellipse cx="10.44" cy="9.87" rx="24.65" ry="22.51" fill="#fff"/><ellipse cx="8.54" cy="8.08" rx="23.86" ry="18.50" fill="url(#lg)"/><ellipse cx="6.74" cy="6.37" rx="21.76" ry="16.96" fill="#fff"/><ellipse cx="5.04" cy="4.77" rx="21.16" ry="13.47" fill="url(#lg)"/><ellipse cx="3.47" cy="3.28" rx="18.99" ry="11.92" fill="#fff"/><ellipse cx="2.05" cy="1.94" rx="17.46" ry="9.51" fill="url(#lg)"/><ellipse cx="0.83" cy="0.79" rx="14.77" ry="7.50" fill="#fff"/><ellipse cx="0.00" cy="0.00" rx="12.42" ry="4.91" fill="url(#lg)"/></g></svg>
<svg style="left:0px;top:85px" width="50" height="50" viewBox="0 0 50 50" fill="none" ><path d="M16.43 36.34A14.0 14.0 0 0 1 11.07 29.84M10.59 28.46A14.0 14.0 0 1 1 31.67 36.34" stroke="#fff" stroke-width="1.5"/><circle cx="23.9" cy="28.1" r="2.6" stroke="#2b8fd6" stroke-width="1.3"/><path d="M25.3 26L31.3 16.9" stroke="#2b8fd6" stroke-width="1.3" stroke-linecap="round"/></svg>
<svg style="left:0px;top:145px" width="50" height="50" viewBox="0 0 50 50" fill="none" ><path d="M19.7 32.6L8.4 21.7V10.7H19.4L35 26.2Q36.4 27.8 35 29.3L27.6 36.6Q25.5 38.2 23.6 36.5L22.5 35.3" stroke="#fff" stroke-width="1.4" fill="none" stroke-linecap="round" stroke-linejoin="round" /><circle cx="14.7" cy="17" r="2.5" stroke="#fff" stroke-width="1.4"/><path d="M22.6 10.5L38 25.6Q39.6 27.6 38.2 29.4L29.2 38.4" stroke="#2b8fd6" stroke-width="1.4" fill="none" stroke-linecap="round" stroke-linejoin="round" /></svg>
<svg style="left:0px;top:205px" width="50" height="50" viewBox="0 0 50 50" fill="none" ><path d="M18.3 15.2V9Q18.3 7.600 19.7 7.600H32.3L39.9 14.9V38Q39.9 39.4 38.5 39.4H30.1" stroke="#fff" stroke-width="1.4" fill="none" stroke-linecap="round" stroke-linejoin="round" /><path d="M32.3 7.600V14.9H39.9" stroke="#fff" stroke-width="1.4" fill="none" stroke-linecap="round" stroke-linejoin="round" /><path d="M25.3 20.5H36.6M27 24.5H36.6M28.1 35.5H36.6" stroke="#fff" stroke-width="1.3" fill="none" stroke-linecap="round" stroke-linejoin="round" /><path d="M25 30.9L27.6 28.7 31.2 32.6 36 28.1M33.8 28H36.1V30.300" stroke="#fff" stroke-width="1.3" fill="none" stroke-linecap="round" stroke-linejoin="round" /><path d="M10.4 23.3L20.5 17.4 24.5 24.2 10.4 32.6 8.200 30.7 11 26.4Z" stroke="#2b8fd6" stroke-width="1.4" fill="none" stroke-linecap="round" stroke-linejoin="round" /><path d="M17 29L23.1 40.4A1.800 1.800 0 0 0 26.3 38.700L20.100 27.3" stroke="#2b8fd6" stroke-width="1.4" fill="none" stroke-linecap="round" stroke-linejoin="round" /></svg>
<svg style="left:0px;top:265px" width="50" height="50" viewBox="0 0 50 50" fill="none" ><path d="M16 36.6H11.5Q9.600 36.6 9.600 34.6V15.8Q9.600 13.8 11.5 13.8H21.2Q22.8 13.8 23.3 15.6L24.5 19.1H36.6Q38.5 19.1 38.5 21.1V34.6Q38.5 36.6 36.6 36.6H19.7" stroke="#fff" stroke-width="1.5" fill="none" stroke-linecap="round" stroke-linejoin="round" /><path d="M27 13.8H35.8Q38.5 13.8 38.5 16.6" stroke="#2b8fd6" stroke-width="1.5" fill="none" stroke-linecap="round" stroke-linejoin="round" /></svg>
<svg style="left:0px;top:326px" width="50" height="50" viewBox="0 0 50 50" fill="none" ><g transform="translate(24.3 25.75) rotate(-43.3)"><path d="M-14.5 -2.200H17.6A2.200 2.200 0 0 1 17.6 2.200H-14.500L-19.6 0Z" stroke="#2b8fd6" stroke-width="1.3" stroke-linejoin="round"/><path d="M13.500 -2.200V2.200M13.500 0.400H15.500" stroke="#2b8fd6" stroke-width="1.2"/></g><g transform="translate(23.95 25.8) rotate(44.5)"><rect x="-16.4" y="-3.500" width="32.8" height="7" rx="1.200" stroke="#fff" stroke-width="1.4" fill="#272c3a"/><path d="M-13.0 3.500V0.8M-10.8 3.500V1.7M-8.6 3.500V0.8M-6.4 3.500V1.7M-4.2 3.500V0.8M-2.0 3.500V1.7M0.2 3.500V0.8M2.4 3.500V1.7M4.6 3.500V0.8M6.8 3.500V1.7" stroke="#fff" stroke-width="1"/><circle cx="12.8" cy="0.600" r="1.500" stroke="#fff" stroke-width="1"/></g></svg>
<svg style="left:0px;top:387px" width="50" height="50" viewBox="0 0 50 50" fill="none" ><rect x="14.9" y="12.1" width="1.800" height="27.8" rx="0.900" stroke="#fff" stroke-width="1"/><clipPath id="fc"><path d="M18.6 15.5Q23 17.8 27.500 15.200T34.700 14.400V24.800Q32 24.200 29.500 25.300T18.600 25Z"/></clipPath><path d="M10.0 30L26.0 12M13.1 30L29.1 12M16.2 30L32.2 12M19.3 30L35.3 12M22.4 30L38.4 12M25.5 30L41.5 12M28.6 30L44.6 12M31.7 30L47.7 12M34.8 30L50.8 12" stroke="#2b8fd6" stroke-width="1.300" clip-path="url(#fc)"/><path d="M17.7 13.5Q23 16.8 27.500 14.200T35.700 13.300V26.300Q33.500 25 31.500 25.500M29 26.600Q23 30.500 17.700 25.600Z" stroke="#fff" stroke-width="1.3" fill="none" stroke-linecap="round" stroke-linejoin="round" /></svg>
<svg style="left:0px;top:448px" width="50" height="50" viewBox="0 0 50 50" fill="none" ><ellipse cx="23.9" cy="18" rx="5.300" ry="6.300" stroke="#fff" stroke-width="1.4"/><path d="M19.400 40.5H16.300Q14.300 40.5 14.300 38.500V29.500Q14.300 27 19.700 25.900L23.900 31.200 27.800 25.900Q33.700 27 33.700 29.500V38.500Q33.700 40.500 31.800 40.500H22.200" stroke="#fff" stroke-width="1.4" fill="none" stroke-linecap="round" stroke-linejoin="round" /></svg>
<svg style="left:0px;top:509px" width="50" height="50" viewBox="0 0 50 50" fill="none" ><clipPath id="sc"><rect x="11.800" y="27.800" width="4.300" height="11.300"/><rect x="21.900" y="12.600" width="4.300" height="26.500"/><rect x="31.800" y="20" width="4.600" height="19.100"/></clipPath><path d="M8 14.0L40 -8.0M8 17.3L40 -4.7M8 20.6L40 -1.4M8 23.9L40 1.9M8 27.2L40 5.2M8 30.5L40 8.5M8 33.8L40 11.8M8 37.1L40 15.1M8 40.4L40 18.4M8 43.7L40 21.7M8 47.0L40 25.0M8 50.3L40 28.3M8 53.6L40 31.6M8 56.9L40 34.9M8 60.2L40 38.2M8 63.5L40 41.5" stroke="#2b8fd6" stroke-width="1.300" clip-path="url(#sc)"/><path d="M11.100 35V28.600Q11.100 27.100 12.600 27.100H15.300Q16.800 27.100 16.800 28.600V38.300Q16.800 39.800 15.300 39.800H12.600Q11.100 39.800 11.100 38.300V37" stroke="#fff" stroke-width="1.4" stroke-linecap="round"/><rect x="21.200" y="11.900" width="5.700" height="27.900" rx="1.500" stroke="#fff" stroke-width="1.4"/><rect x="31.100" y="19.300" width="6" height="20.500" rx="1.500" stroke="#fff" stroke-width="1.4"/></svg>
<svg style="left:0px;top:570px" width="50" height="50" viewBox="0 0 50 50" fill="none" ><path d="M19 15.700H17.700Q15.700 15.700 15.700 17.700V32M15.700 36V38.200Q15.700 40.200 17.700 40.200H20M23 40.200H36.200Q38.200 40.200 38.200 38.200V17.700Q38.200 15.700 36.200 15.700H35.500" stroke="#fff" stroke-width="1.5" fill="none" stroke-linecap="round" stroke-linejoin="round" /><path d="M20.500 12.400H24.500V10.100H29.500V12.400H33.700V17.700H20.500Z" stroke="#2b8fd6" stroke-width="1.4" fill="none" stroke-linecap="round" stroke-linejoin="round" /><path d="M9 34H23.400M19.100 30.400L23.600 34 19.100 38.200" stroke="#2b8fd6" stroke-width="1.5" fill="none" stroke-linecap="round" stroke-linejoin="round" /></svg>
<svg style="left:0px;top:631px" width="50" height="50" viewBox="0 0 50 50" fill="none" ><path d="M27.57 33.92 L26.29 37.00 L24.01 36.09 L22.39 37.71 L23.30 39.99 L20.22 41.27 L19.24 39.01 L16.96 39.01 L15.98 41.27 L12.90 39.99 L13.81 37.71 L12.19 36.09 L9.91 37.00 L8.63 33.92 L10.89 32.94 L10.89 30.66 L8.63 29.68 L9.91 26.60 L12.19 27.51 L13.81 25.89 L12.90 23.61 L15.98 22.33 L16.96 24.59 L19.24 24.59 L20.22 22.33 L23.30 23.61 L22.39 25.89 L24.01 27.51 L26.29 26.60 L27.57 29.68 L25.31 30.66 L25.31 32.94Z" stroke="#fff" stroke-width="1.4" stroke-linejoin="round"/><path d="M14.91 32.08A3.200 3.200 0 1 1 16.04 34.25" stroke="#fff" stroke-width="1.4" stroke-linecap="round"/><path d="M39.59 17.99 L39.37 20.19 L37.35 20.01 L36.75 21.38 L38.25 22.75 L36.78 24.40 L35.25 23.06 L33.95 23.82 L34.36 25.81 L32.21 26.28 L31.75 24.30 L30.26 24.15 L29.42 26.00 L27.40 25.11 L28.20 23.24 L27.08 22.24 L25.31 23.25 L24.20 21.34 L25.94 20.30 L25.62 18.83 L23.61 18.61 L23.83 16.41 L25.85 16.59 L26.45 15.22 L24.95 13.85 L26.42 12.20 L27.95 13.54 L29.25 12.78 L28.84 10.79 L30.99 10.32 L31.45 12.30 L32.94 12.45 L33.78 10.60 L35.80 11.49 L35.00 13.36 L36.12 14.36 L37.89 13.35 L39.00 15.26 L37.26 16.30 L37.58 17.77Z" stroke="#2b8fd6" stroke-width="1.200" stroke-linejoin="round"/><circle cx="31.600" cy="18.300" r="2.700" stroke="#2b8fd6" stroke-width="1.200"/></svg>
<svg style="left:0px;top:855px" width="50" height="24" viewBox="0 0 50 24" fill="none" ><path d="M23.750 0.500L12.500 11.250 23.750 22.500M35 0.500L24.250 11.250 35 22.500" stroke="#fff" stroke-width="1.3" fill="none" stroke-linecap="round" stroke-linejoin="round" /></svg>
<div id="sb"><div class="thumb"></div><svg style="left:7px;top:10px" width="11" height="6" viewBox="0 0 11 6"><path d="M0 6L5.500 0 11 6z" fill="#a3a3a3"/></svg><svg style="left:7px;top:874px" width="11" height="6" viewBox="0 0 11 6"><path d="M0 0h11L5.500 6z" fill="#505050"/></svg></div>
<div class="a" style="left:1836px;top:746px;width:60px;height:60px;border-radius:50%;background:#0066cc;box-shadow:0 1px 6px rgba(0,0,0,.18)"></div>
<div class="t" style="left:1853.81px;top:752px;font-size:44px;line-height:49px;color:#fff;font-weight:bold;">?</div>
<div class="a" style="left:1870.8px;top:779.3px;width:41px;height:41px;border-radius:50%;background:rgba(255,104,104,.55)"></div>
<div class="a" style="left:1874.5px;top:783.3px;width:33px;height:33px;border-radius:50%;background:#ff6868"></div>
<div class="t" style="left:1887.21px;top:791px;font-size:16px;line-height:17px;color:#fff;">1</div>
</body>
</html>
